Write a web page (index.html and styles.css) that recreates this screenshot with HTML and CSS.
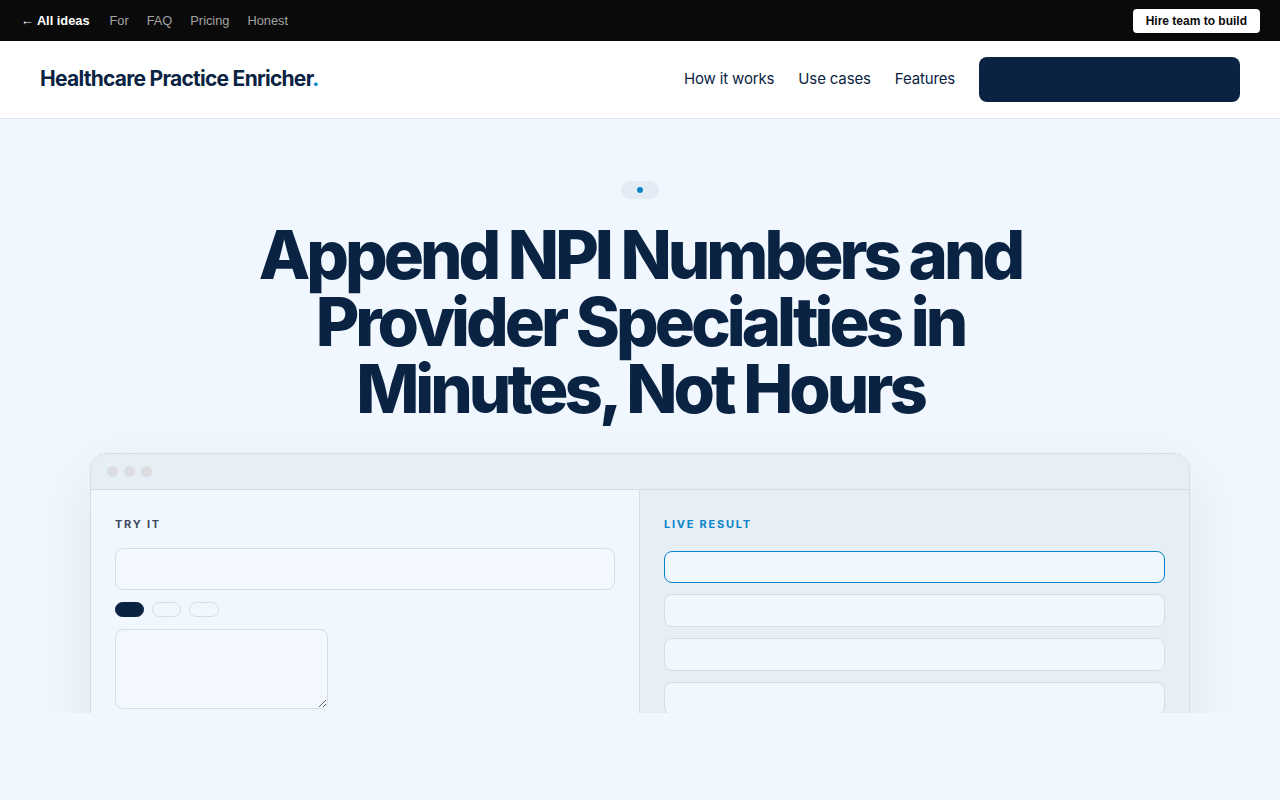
FILE: index.html
```html
<!DOCTYPE html>
<html lang="en">
<head>
  <meta charset="UTF-8" />
  <meta name="viewport" content="width=device-width, initial-scale=1" />
  <title>Healthcare Practice Enricher</title>
  <link rel="stylesheet" href="styles.css">
</head>
<body>

<div class="topbar">
  <nav class="topbar-links">
    <a href="#" class="back">&larr; All ideas</a>
    <a href="#">For</a>
    <a href="#">FAQ</a>
    <a href="#">Pricing</a>
    <a href="#">Honest</a>
  </nav>
  <a href="#" class="hire-btn">Hire team to build</a>
</div>

<header class="site-header">
  <a href="#" class="logo">Healthcare Practice Enricher<span class="logo-dot">.</span></a>
  <nav class="main-nav">
    <a href="#">How it works</a>
    <a href="#">Use cases</a>
    <a href="#">Features</a>
    <button class="cta-btn" type="button"></button>
  </nav>
</header>

<section class="hero">
  <div class="badge"><span class="badge-dot"></span></div>
  <h1>Append NPI Numbers and Provider Specialties in Minutes, Not Hours</h1>

  <div class="demo">
    <div class="demo-bar">
      <span></span><span></span><span></span>
    </div>
    <div class="demo-body">
      <div class="demo-input">
        <div class="panel-label">Try it</div>
        <input type="text" class="field" />
        <div class="chips">
          <span class="chip active"></span>
          <span class="chip"></span>
          <span class="chip"></span>
        </div>
        <textarea class="notes"></textarea>
      </div>
      <div class="demo-result">
        <div class="panel-label live">Live result</div>
        <div class="result-rows">
          <div class="result-row highlight"></div>
          <div class="result-row"></div>
          <div class="result-row"></div>
          <div class="result-row"></div>
          <div class="result-row"></div>
        </div>
      </div>
    </div>
  </div>
</section>

</body>
</html>
```

FILE: styles.css
```css
body {
  margin: 0;
  background-color: #f0f7fe;
  font-family: Inter, "Noto Sans", sans-serif;
  color: #0a2342;
}
a {
  text-decoration: none;
  color: inherit;
}

/* top strip */
.topbar {
  height: 41px;
  background-color: #0a0a0a;
  display: flex;
  align-items: center;
  justify-content: space-between;
  padding: 0 20px 0 21px;
  font-family: "Liberation Sans", Arial, sans-serif;
  font-size: 12.8px;
}
.topbar-links {
  display: flex;
  gap: 18px;
}
.topbar-links a {
  color: #a3a3a3;
}
.topbar-links .back {
  color: #fff;
  font-weight: bold;
  margin-right: 2px;
}
.hire-btn {
  background: #fff;
  color: #0a0a0a;
  font-weight: bold;
  font-size: 12px;
  padding: 5px 13px;
  border-radius: 4px;
}

/* main header */
.site-header {
  height: 77px;
  background: #fff;
  border-bottom: 1px solid #e2e8f0;
  display: flex;
  align-items: center;
  justify-content: space-between;
  padding: 0 40px;
}
.logo {
  font-size: 21px;
  font-weight: 700;
  letter-spacing: -0.035em;
  color: #0a2342;
  margin-top: -2px;
}
.logo-dot {
  color: #0a84c8;
}
.main-nav {
  display: flex;
  align-items: center;
  gap: 24px;
  font-size: 15px;
  letter-spacing: -0.01em;
}
.main-nav a {
  margin-top: -2px;
}
.cta-btn {
  width: 261px;
  height: 45px;
  border: none;
  border-radius: 8px;
  background: #0a2342;
  cursor: pointer;
}

/* hero */
.hero {
  height: 594px;
  overflow: hidden;
  display: flex;
  flex-direction: column;
  align-items: center;
  padding-top: 62px;
  box-sizing: border-box;
}
.hero > * {
  flex-shrink: 0;
}
.badge {
  width: 38px;
  height: 18px;
  border-radius: 9px;
  background: #e3ecf5;
  display: flex;
  align-items: center;
  justify-content: center;
}
.badge-dot {
  width: 6px;
  height: 6px;
  border-radius: 50%;
  background: #0a84c8;
}
.hero h1 {
  margin: 22px 0 31px;
  max-width: 800px;
  text-align: center;
  font-size: 67px;
  line-height: 67px;
  font-weight: 800;
  letter-spacing: -0.06em;
  color: #0a2342;
}

/* demo window */
.demo {
  width: 1100px;
  border: 1px solid #d5dde7;
  border-radius: 16px;
  overflow: hidden;
  box-sizing: border-box;
  background: #f0f7fe;
  box-shadow: 0 20px 60px rgba(10, 35, 66, 0.08);
}
.demo-bar {
  height: 35px;
  background: #e6eef6;
  border-bottom: 1px solid #d5dde7;
  display: flex;
  align-items: center;
  gap: 6px;
  padding-left: 16px;
}
.demo-bar span {
  width: 11px;
  height: 11px;
  border-radius: 50%;
  background: #dcdde0;
}
.demo-body {
  display: grid;
  grid-template-columns: 549px 1fr;
}
.demo-input {
  padding: 27px 24px;
  border-right: 1px solid #d5dde7;
}
.demo-result {
  padding: 27px 24px;
  background: #e6eef6;
}
.panel-label {
  font-size: 11px;
  font-weight: 700;
  letter-spacing: 0.16em;
  text-transform: uppercase;
  color: #3e4a5c;
  margin-bottom: 17px;
}
.panel-label.live {
  color: #0a84c8;
  margin-bottom: 20px;
}
.field {
  display: block;
  width: 100%;
  height: 42px;
  box-sizing: border-box;
  border: 1px solid #d5dde7;
  border-radius: 8px;
  background: #f2f8fe;
}
.chips {
  display: flex;
  gap: 8px;
  margin: 12px 0;
}
.chip {
  width: 29px;
  height: 15px;
  box-sizing: border-box;
  border: 1px solid #d5dde7;
  border-radius: 8px;
}
.chip.active {
  background: #0a2342;
  border-color: #0a2342;
}
.chip:last-child {
  width: 30px;
}
.notes {
  display: block;
  width: 213px;
  height: 80px;
  box-sizing: border-box;
  border: 1px solid #d5dde7;
  border-radius: 8px;
  background: #f2f8fe;
}
.result-rows {
  display: flex;
  flex-direction: column;
  gap: 11px;
}
.result-row {
  height: 33px;
  box-sizing: border-box;
  border: 1px solid #d5dde7;
  border-radius: 8px;
  background: #f0f7fe;
}
.result-row.highlight {
  border-color: #0a84c8;
  height: 32px;
}
```
